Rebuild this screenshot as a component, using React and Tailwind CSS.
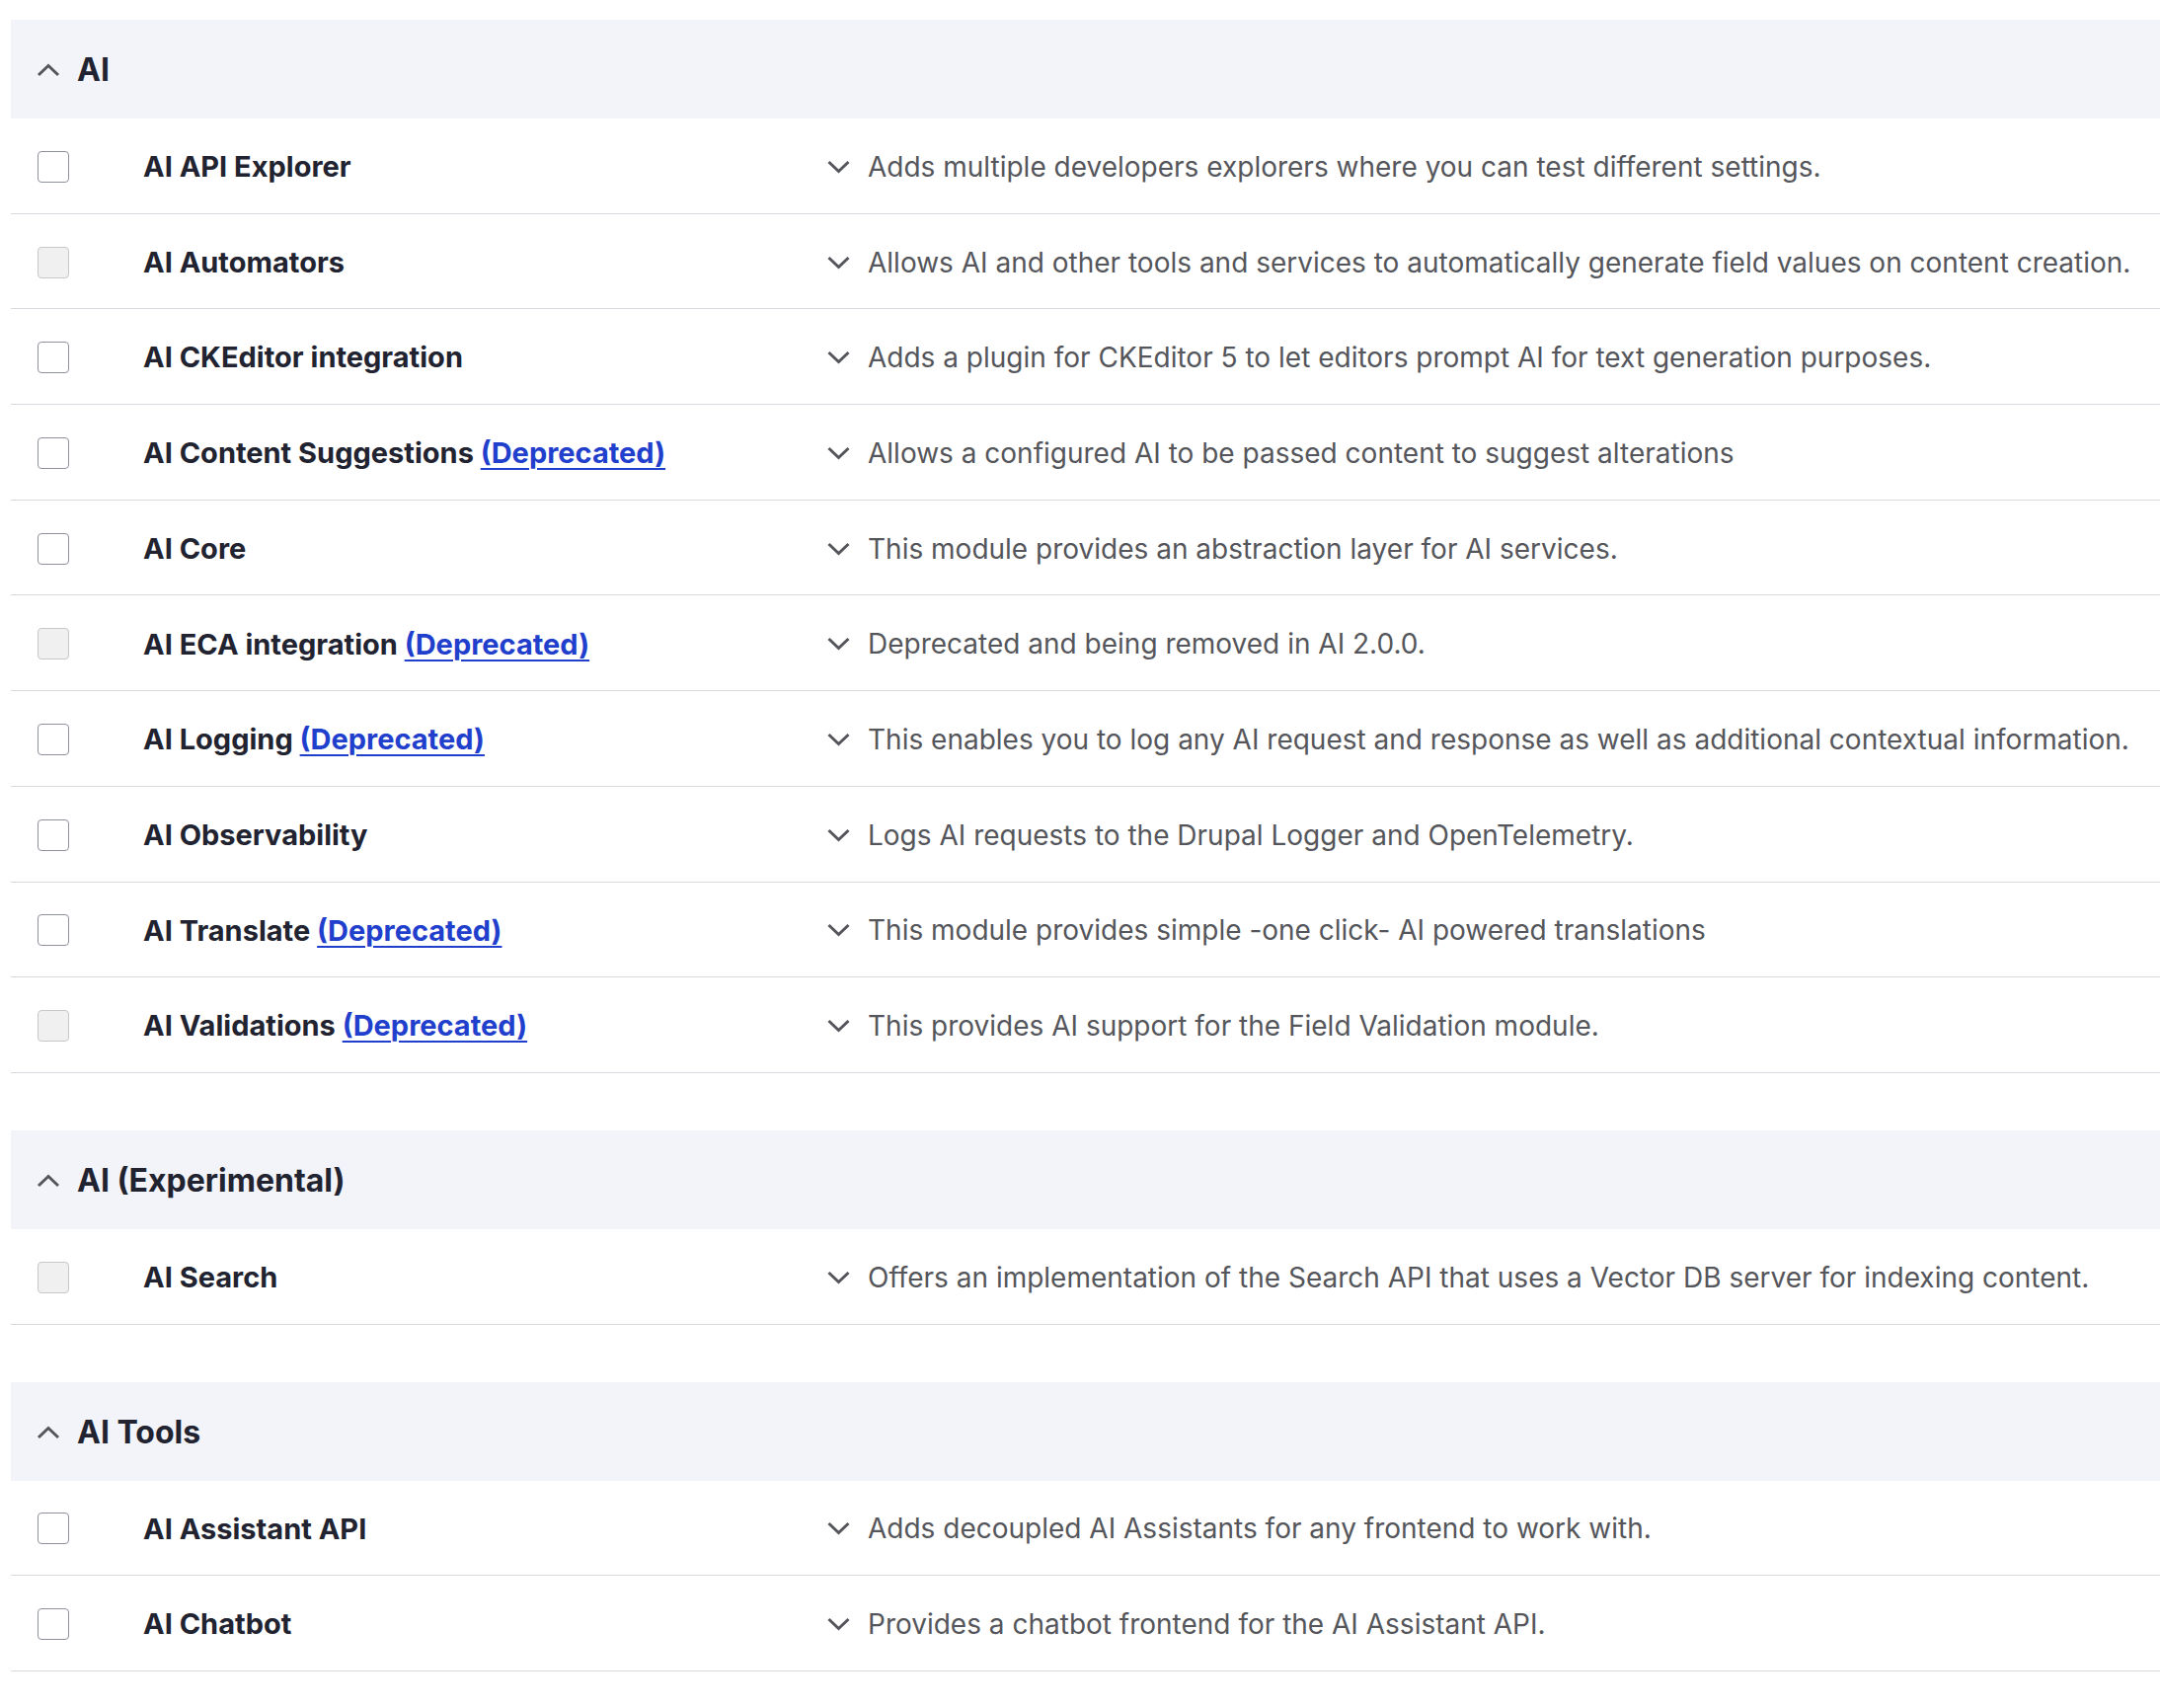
import React from "react";

const sections = [
  {
    title: "AI",
    rows: [
      { name: "AI API Explorer", desc: "Adds multiple developers explorers where you can test different settings." },
      { name: "AI Automators", disabled: true, desc: "Allows AI and other tools and services to automatically generate field values on content creation." },
      { name: "AI CKEditor integration", desc: "Adds a plugin for CKEditor 5 to let editors prompt AI for text generation purposes." },
      { name: "AI Content Suggestions", deprecated: true, desc: "Allows a configured AI to be passed content to suggest alterations" },
      { name: "AI Core", desc: "This module provides an abstraction layer for AI services." },
      { name: "AI ECA integration", deprecated: true, disabled: true, desc: "Deprecated and being removed in AI 2.0.0." },
      { name: "AI Logging", deprecated: true, desc: "This enables you to log any AI request and response as well as additional contextual information." },
      { name: "AI Observability", desc: "Logs AI requests to the Drupal Logger and OpenTelemetry." },
      { name: "AI Translate", deprecated: true, desc: "This module provides simple -one click- AI powered translations" },
      { name: "AI Validations", deprecated: true, disabled: true, desc: "This provides AI support for the Field Validation module." },
    ],
  },
  {
    title: "AI (Experimental)",
    rows: [
      { name: "AI Search", disabled: true, desc: "Offers an implementation of the Search API that uses a Vector DB server for indexing content." },
    ],
  },
  {
    title: "AI Tools",
    rows: [
      { name: "AI Assistant API", desc: "Adds decoupled AI Assistants for any frontend to work with." },
      { name: "AI Chatbot", desc: "Provides a chatbot frontend for the AI Assistant API." },
    ],
  },
];

function ChevronUp() {
  return (
    <svg width="24" height="14" viewBox="0 0 24 14" className="shrink-0">
      <polyline points="2,12 12,2.5 22,12" fill="none" stroke="#55565b" strokeWidth="3" strokeLinecap="butt" strokeLinejoin="miter" />
    </svg>
  );
}

function ChevronDown() {
  return (
    <svg width="23" height="14" viewBox="0 0 23 14" className="shrink-0">
      <polyline points="1.5,2 11.5,11.5 21.5,2" fill="none" stroke="#55565b" strokeWidth="3" strokeLinecap="butt" strokeLinejoin="miter" />
    </svg>
  );
}

function Row({ row }) {
  return (
    <div className="flex h-[96.7px] items-center border-b border-[#d8d9de] pt-[2px]">
      <div className="w-[134px] shrink-0 pl-[27px]">
        <div
          className={
            row.disabled
              ? "h-[32px] w-[32px] rounded-[4px] border border-[#c6c7cb] bg-[#f0f0f0]"
              : "h-[32px] w-[32px] rounded-[4px] border border-[#8e929c] bg-white"
          }
        />
      </div>
      <div className="w-[693px] shrink-0 text-[29px] font-bold text-[#222330]">
        {row.name}
        {row.deprecated && (
          <>
            {" "}
            <a href="#" className="text-[#1f3fcc] underline decoration-2 underline-offset-[5px]">(Deprecated)</a>
          </>
        )}
      </div>
      <div className="flex items-center gap-[18px] whitespace-nowrap text-[28px] text-[#55565b]">
        <ChevronDown />
        <span>{row.desc}</span>
      </div>
    </div>
  );
}

export default function App() {
  return (
    <div className="min-h-[1730px] w-full overflow-hidden bg-white pt-[20px] pl-[11px]" style={{ fontFamily: "Inter, 'Noto Sans', sans-serif" }}>
      {sections.map((s, i) => (
        <div key={s.title} className={i > 0 ? "mt-[58px]" : ""}>
          <div className="flex h-[100px] items-center gap-[17px] bg-[#f3f4f9] pl-[26px] pt-[2px]">
            <ChevronUp />
            <span className="text-[32px] font-bold text-[#222330]">{s.title}</span>
          </div>
          {s.rows.map((r) => (
            <Row key={r.name} row={r} />
          ))}
        </div>
      ))}
    </div>
  );
}
